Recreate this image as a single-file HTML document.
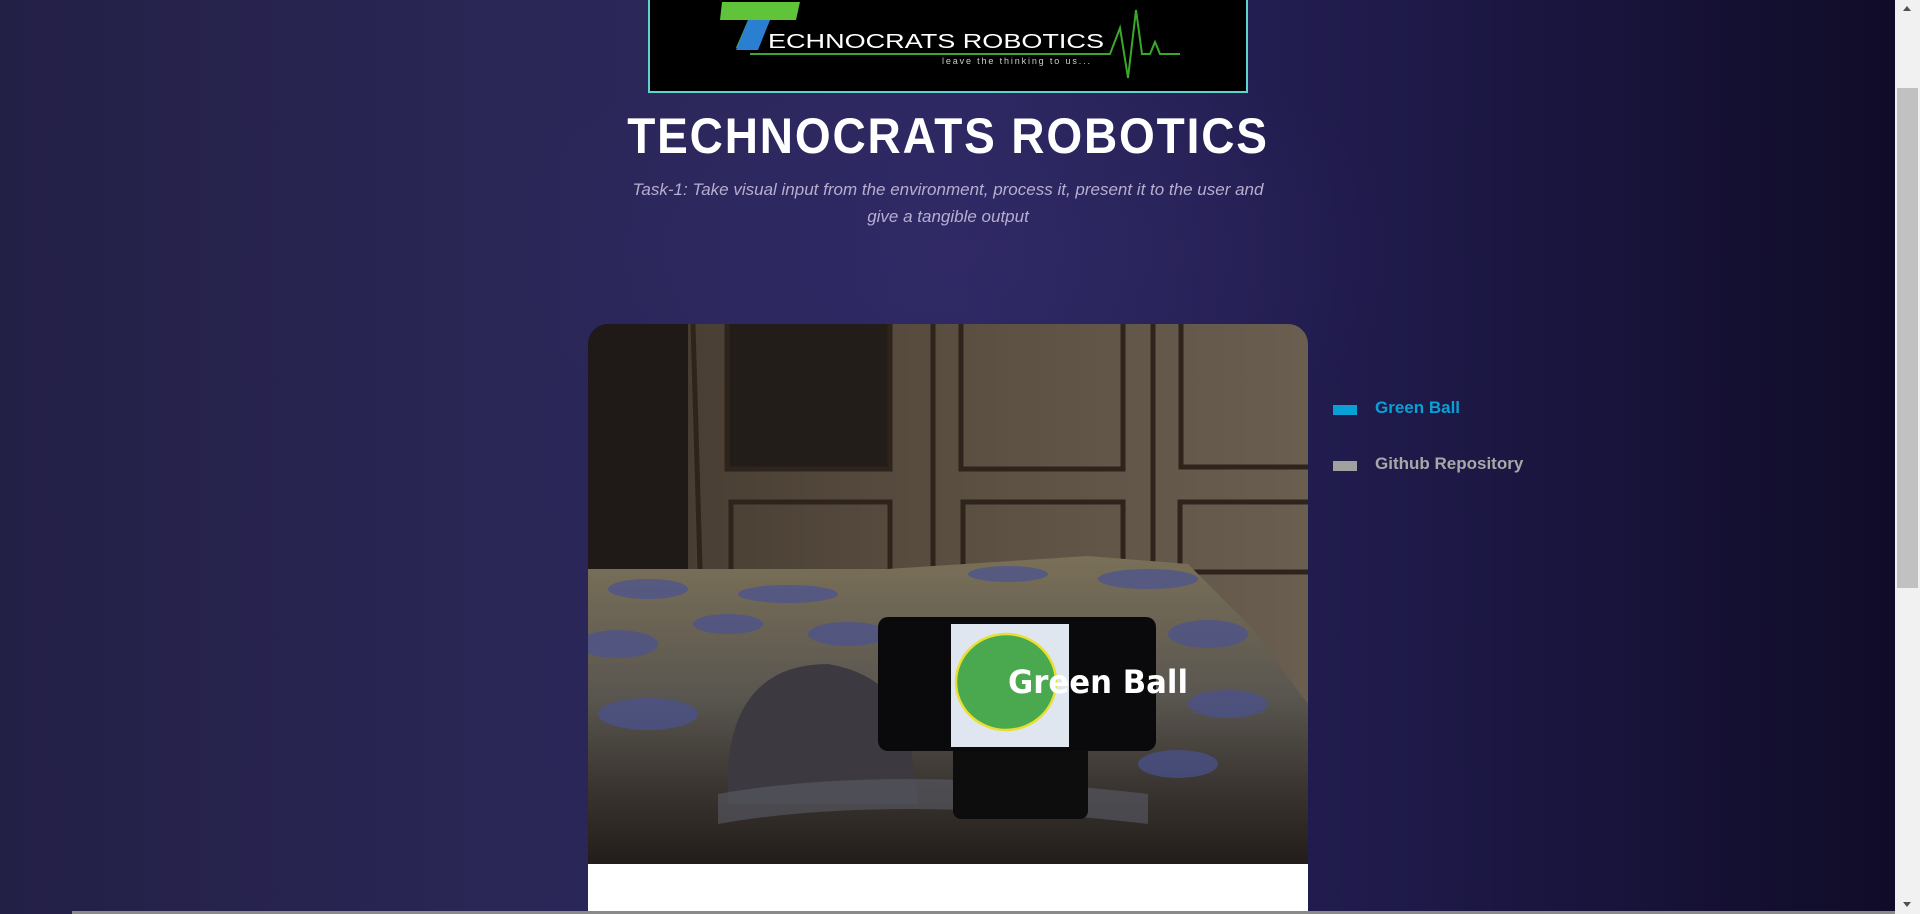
<!DOCTYPE html>
<html><head><meta charset="utf-8"><style>
*{margin:0;padding:0;box-sizing:border-box}
html,body{width:1920px;height:914px;overflow:hidden}
body{position:relative;background:linear-gradient(90deg,#232046 0%,#2a2655 25%,#2c2860 50%,#1f1a4a 72%,#0f0b26 100%);font-family:"Liberation Sans",sans-serif}
.glow{position:absolute;left:500px;top:0;width:900px;height:500px;background:radial-gradient(ellipse at center,rgba(50,42,105,.6),rgba(0,0,0,0) 70%)}
.abs{position:absolute}
.logo{left:648px;top:-4px;width:600px;height:97px;background:#000;border:2px solid #5fd3cf}
.title{left:448px;top:111px;width:1000px;text-align:center;color:#fff;font-size:50px;line-height:50px;font-weight:bold;letter-spacing:2px;transform:scaleX(0.92);transform-origin:center}
.sub{left:623px;top:176px;width:650px;text-align:center;color:#b7aed0;font-size:17px;font-style:italic;line-height:27px}
.photo{left:588px;top:324px;width:720px;height:540px;border-radius:20px 20px 0 0;overflow:hidden;background:#3a3128}
.white{left:588px;top:864px;width:720px;height:50px;background:#fff}
.nav{font-size:17px;font-weight:bold}
.sb{left:1895px;top:0;width:25px;height:914px;background:#f1f1f1}
</style></head><body>
<div class="glow abs"></div>
<div class="abs logo">
<svg width="596" height="93" viewBox="0 0 596 93">
<polygon points="72,4 150,4 146,22 120,22 108,50 86,50 98,22 70,22" fill="#5fc43a"/>
<polygon points="98,22 120,22 108,52 86,52" fill="#2a7fd0"/>
<text x="118" y="50" fill="#fff" font-family="Liberation Sans" font-size="20" textLength="336" lengthAdjust="spacingAndGlyphs">ECHNOCRATS ROBOTICS</text>
<polyline points="100,56 460,56 470,30 478,80 486,12 492,56 500,56 505,44 510,56 530,56" fill="none" stroke="#3aa82a" stroke-width="2"/>
<text x="292" y="66" fill="#ccc" font-family="Liberation Sans" font-size="9" textLength="148">leave the thinking to us...</text>
</svg></div>
<div class="abs title">TECHNOCRATS ROBOTICS</div>
<div class="abs sub">Task-1: Take visual input from the environment, process it, present it to the user and give a tangible output</div>
<div class="abs photo">
<svg width="720" height="540" viewBox="0 0 720 540">
<defs><linearGradient id="w" x1="0" x2="1"><stop offset="0" stop-color="#1c1815"/><stop offset=".15" stop-color="#4a3f34"/><stop offset=".6" stop-color="#5e5244"/><stop offset="1" stop-color="#6a5e50"/></linearGradient>
<linearGradient id="bed" x1="0" y1="0" x2="0" y2="1"><stop offset="0" stop-color="#7a7058"/><stop offset=".45" stop-color="#5a5650"/><stop offset=".75" stop-color="#3a3530"/><stop offset="1" stop-color="#221d1a"/></linearGradient></defs>
<rect width="720" height="540" fill="url(#w)"/>
<rect x="0" y="0" width="100" height="260" fill="#1f1a17"/>
<g fill="none" stroke="#2e241c" stroke-width="5">
<rect x="139" y="-5" width="163" height="150" fill="#221d18"/><rect x="373" y="-5" width="162" height="150"/><rect x="593" y="-5" width="140" height="148"/>
<rect x="143" y="178" width="159" height="70"/><rect x="375" y="178" width="160" height="70"/><rect x="592" y="178" width="140" height="70"/>
<line x1="345" y1="0" x2="345" y2="245"/><line x1="565" y1="0" x2="565" y2="245"/><line x1="105" y1="0" x2="112" y2="245"/></g>
<path d="M0,245 L300,245 L500,232 L600,240 L660,300 L720,380 L720,540 L0,540 Z" fill="url(#bed)"/>
<g fill="#4a5292" opacity=".7">
<ellipse cx="60" cy="265" rx="40" ry="10"/><ellipse cx="200" cy="270" rx="50" ry="9"/><ellipse cx="420" cy="250" rx="40" ry="8"/><ellipse cx="560" cy="255" rx="50" ry="10"/>
<ellipse cx="30" cy="320" rx="40" ry="14"/><ellipse cx="140" cy="300" rx="35" ry="10"/><ellipse cx="260" cy="310" rx="40" ry="12"/><ellipse cx="620" cy="310" rx="40" ry="14"/>
<ellipse cx="60" cy="390" rx="50" ry="16"/><ellipse cx="640" cy="380" rx="40" ry="14"/><ellipse cx="590" cy="440" rx="40" ry="14"/></g>
<path d="M140,440 Q150,340 240,340 Q300,350 320,400 L330,480 L140,480 Z" fill="#3c3a40"/>
<path d="M130,470 Q300,440 560,470 L560,500 Q300,470 130,500 Z" fill="#5a5c68" opacity=".6"/>
<rect x="365" y="420" width="135" height="75" rx="8" fill="#0d0d0d"/>
<rect x="290" y="293" width="278" height="134" rx="10" fill="#0a0a0c"/>
<rect x="363" y="300" width="118" height="123" fill="#dfe6ef"/>
<ellipse cx="418" cy="358" rx="50" ry="48" fill="#4aa84f" stroke="#e8e030" stroke-width="2.5"/>
<text x="420" y="369" fill="#fff" font-family="DejaVu Sans" font-weight="bold" font-size="32" textLength="180" lengthAdjust="spacingAndGlyphs">Green Ball</text>
</svg></div>
<div class="abs white"></div>
<div class="abs" style="left:1333px;top:405px;width:24px;height:10px;background:#0aa0d6"></div>
<div class="abs nav" style="left:1375px;top:398px;color:#0aa0d6">Green Ball</div>
<div class="abs" style="left:1333px;top:461px;width:24px;height:10px;background:#a0a0a0"></div>
<div class="abs nav" style="left:1375px;top:454px;color:#a8a8a8">Github Repository</div>
<div class="abs sb"><div class="abs" style="left:2px;top:88px;width:21px;height:500px;background:#c1c1c1"></div>
<div class="abs" style="left:8px;top:6px;width:0;height:0;border:4px solid transparent;border-bottom:5px solid #505050;border-top:0"></div>
<div class="abs" style="left:8px;top:902px;width:0;height:0;border:4px solid transparent;border-top:5px solid #505050;border-bottom:0"></div></div>
<div class="abs" style="left:72px;top:911px;width:1823px;height:3px;background:#8a8a8a"></div>
</body></html>
